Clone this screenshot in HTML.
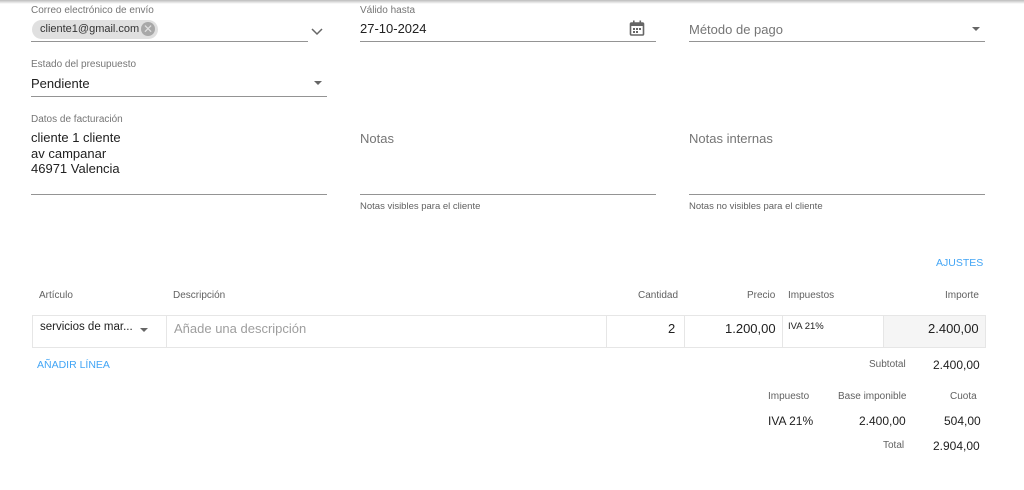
<!DOCTYPE html><html><head><meta charset="utf-8"><style>
body{margin:0;width:1024px;height:490px;background:#fff;font-family:"Liberation Sans",sans-serif;position:relative;overflow:hidden;color:#212121}
.a{position:absolute;white-space:nowrap}
.lbl{font-size:10px;color:#757575}
.v{font-size:13px;color:#212121}
.ph{font-size:13px;color:#757575}
.ln{position:absolute;height:1px;background:#949494}
.hint{font-size:9.5px;color:#616161}
.th{font-size:10px;color:#616161}
.blue{color:#42a5f5;font-size:10.5px}
.tri{position:absolute;width:0;height:0;border-left:4px solid transparent;border-right:4px solid transparent;border-top:4px solid #666}
</style></head><body>
<div style="position:absolute;left:0;top:0;width:1024px;height:4px;background:linear-gradient(#bbb,#fff)"></div>
<div class="a lbl" style="left:31px;top:5px">Correo electrónico de envío</div>
<div class="a" style="left:32px;top:20px;width:126px;height:19px;border-radius:10px;background:#e0e0e0"></div>
<div class="a" style="left:40px;top:23px;font-size:11px;color:#333">cliente1@gmail.com</div>
<div class="a" style="left:141px;top:22px;width:14px;height:14px;border-radius:50%;background:#a8a8a8;color:#e0e0e0;font-size:12px;line-height:14px;text-align:center">✕</div>
<div class="ln" style="left:31px;top:41px;width:277px"></div>
<svg class="a" style="left:311px;top:28px" width="12" height="8"><path d="M1 1l5 5 5-5" stroke="#666" stroke-width="1.5" fill="none"/></svg>
<div class="a lbl" style="left:360px;top:5px">Válido hasta</div>
<div class="a v" style="left:360px;top:21px">27-10-2024</div>
<svg class="a" style="left:629px;top:20px" width="16" height="17"><rect x="1.5" y="3" width="13" height="12" rx="1" stroke="#666" stroke-width="1.6" fill="none"/><rect x="1.5" y="3" width="13" height="3" fill="#666"/><rect x="4" y="0.5" width="1.6" height="3" fill="#666"/><rect x="10.5" y="0.5" width="1.6" height="3" fill="#666"/><rect x="4" y="8" width="2" height="2" fill="#666"/><rect x="7" y="8" width="2" height="2" fill="#666"/><rect x="10" y="8" width="2" height="2" fill="#666"/><rect x="4" y="11" width="2" height="2" fill="#666"/><rect x="7" y="11" width="2" height="2" fill="#666"/></svg>
<div class="ln" style="left:360px;top:41px;width:296px"></div>
<div class="a ph" style="left:689px;top:22px">Método de pago</div>
<div class="tri" style="left:972px;top:27px"></div>
<div class="ln" style="left:689px;top:41px;width:296px"></div>
<div class="a lbl" style="left:31px;top:59px">Estado del presupuesto</div>
<div class="a v" style="left:31px;top:76px">Pendiente</div>
<div class="tri" style="left:314px;top:81px"></div>
<div class="ln" style="left:31px;top:96px;width:296px"></div>
<div class="a lbl" style="left:31px;top:114px">Datos de facturación</div>
<div class="a v" style="left:31px;top:130px;line-height:15.5px">cliente 1 cliente<br>av campanar<br>46971 Valencia</div>
<div class="ln" style="left:31px;top:194px;width:296px"></div>
<div class="a ph" style="left:360px;top:131px">Notas</div>
<div class="ln" style="left:360px;top:194px;width:296px"></div>
<div class="a hint" style="left:360px;top:201px">Notas visibles para el cliente</div>
<div class="a ph" style="left:689px;top:131px">Notas internas</div>
<div class="ln" style="left:689px;top:194px;width:296px"></div>
<div class="a hint" style="left:689px;top:201px">Notas no visibles para el cliente</div>
<div class="a blue" style="left:936px;top:257px">AJUSTES</div>
<div class="a th" style="left:39px;top:290px">Artículo</div>
<div class="a th" style="left:173px;top:290px">Descripción</div>
<div class="a th" style="left:638px;top:290px">Cantidad</div>
<div class="a th" style="left:747px;top:290px">Precio</div>
<div class="a th" style="left:788px;top:290px">Impuestos</div>
<div class="a th" style="left:945px;top:290px">Importe</div>
<div class="a" style="left:32px;top:315px;width:952px;height:31px;border:1px solid #e6e6e6"></div>
<div class="a" style="left:883px;top:316px;width:101px;height:31px;background:#f5f5f5;border-left:1px solid #e6e6e6"></div>
<div class="a" style="left:166px;top:316px;width:1px;height:31px;background:#e6e6e6"></div>
<div class="a" style="left:606px;top:316px;width:1px;height:31px;background:#e6e6e6"></div>
<div class="a" style="left:684px;top:316px;width:1px;height:31px;background:#e6e6e6"></div>
<div class="a" style="left:782px;top:316px;width:1px;height:31px;background:#e6e6e6"></div>
<div class="a" style="left:40px;top:321px;font-size:11.5px">servicios de mar...</div>
<div class="tri" style="left:140px;top:328px"></div>
<div class="a" style="left:174px;top:321px;font-size:13px;color:#9e9e9e">Añade una descripción</div>
<div class="a v" style="left:668px;top:321px">2</div>
<div class="a v" style="left:725px;top:321px">1.200,00</div>
<div class="a" style="left:788px;top:321px;font-size:9.5px">IVA 21%</div>
<div class="a v" style="left:928px;top:321px">2.400,00</div>
<div class="a blue" style="left:37px;top:359px">AÑADIR LÍNEA</div>
<div class="a th" style="left:869px;top:359px">Subtotal</div>
<div class="a" style="left:933px;top:358px;font-size:12px">2.400,00</div>
<div class="a th" style="left:768px;top:391px">Impuesto</div>
<div class="a th" style="left:838px;top:391px">Base imponible</div>
<div class="a th" style="left:950px;top:391px">Cuota</div>
<div class="a" style="left:768px;top:414px;font-size:12px">IVA 21%</div>
<div class="a" style="left:859px;top:414px;font-size:12px">2.400,00</div>
<div class="a" style="left:944px;top:414px;font-size:12px">504,00</div>
<div class="a th" style="left:883px;top:440px">Total</div>
<div class="a" style="left:933px;top:439px;font-size:12px">2.904,00</div>
</body></html>
